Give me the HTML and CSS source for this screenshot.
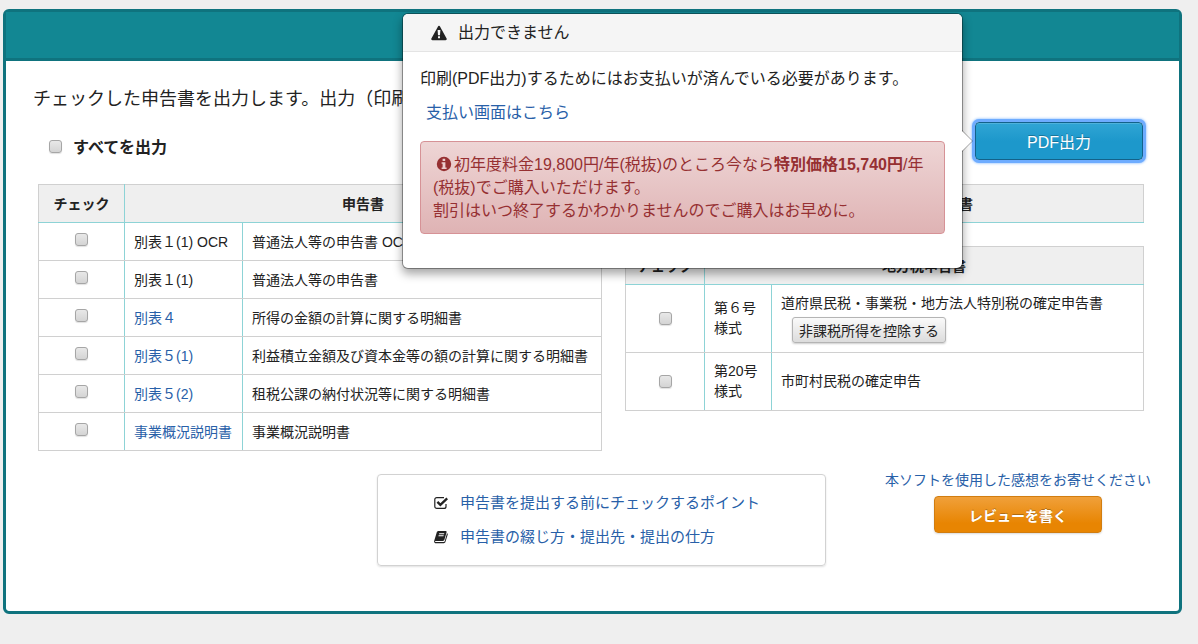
FILE: index.html
```html
<!DOCTYPE html>
<html lang="ja">
<head>
<meta charset="utf-8">
<title>申告書の出力</title>
<link rel="stylesheet" href="styles.css">
</head>
<body>
<main class="panel">
  <header class="panel-head"></header>
  <section class="panel-body">
    <p class="lead">チェックした申告書を出力します。出力（印刷）します。</p>
    <div class="toolbar">
      <label class="check-all"><input type="checkbox" class="check">すべてを出力</label>
      <div class="output">
        <button type="button" class="btn btn-primary">PDF出力</button>
        <div class="popover" role="dialog" aria-labelledby="pop-title">
          <h3 class="popover-title" id="pop-title">
            <svg class="icon-warn" viewBox="0 0 16 16" aria-hidden="true"><path fill="currentColor" fill-rule="evenodd" d="M8 .8c.5 0 .8.3 1 .6l6.6 12c.5.9-.1 1.8-1 1.8H1.400c-.9 0-1.500-.9-1-1.800l6.600-12c.2-.3.500-.6 1-.6zM6.600 5l.4 5.200h2L9.400 5zM7 11.300v2h2v-2z"/></svg>
            出力できません
          </h3>
          <div class="popover-body">
            <p class="popover-text">印刷(PDF出力)するためにはお支払いが済んでいる必要があります。</p>
            <p class="popover-link"><a href="#payment">支払い画面はこちら</a></p>
            <p class="alert"><svg class="icon-info" viewBox="0 0 16 16" aria-hidden="true"><path fill="currentColor" fill-rule="evenodd" d="M8 .8a7.200 7.200 0 1 1 0 14.400A7.200 7.200 0 0 1 8 .8zM6.600 2.800v2.200h2.600V2.800zM5.600 6.200v1.600h1v3.600h-1V13h5v-1.600h-1.200V6.200z"/></svg>初年度料金19,800円/年(税抜)のところ今なら<strong>特別価格15,740円</strong>/年(税抜)でご購入いただけます。<br>割引はいつ終了するかわかりませんのでご購入はお早めに。</p>
          </div>
        </div>
      </div>
    </div>
    <div class="tables">
      <table class="forms forms-main">
        <colgroup><col class="col-check"><col class="col-name"><col></colgroup>
        <thead><tr><th>チェック</th><th colspan="2">申告書</th></tr></thead>
        <tbody>
          <tr><td class="mark"><input type="checkbox" class="check" aria-label="別表１(1) OCR"></td><td>別表１(1) OCR</td><td>普通法人等の申告書 OCR</td></tr>
          <tr><td class="mark"><input type="checkbox" class="check" aria-label="別表１(1)"></td><td>別表１(1)</td><td>普通法人等の申告書</td></tr>
          <tr><td class="mark"><input type="checkbox" class="check" aria-label="別表４"></td><td><a href="#b4">別表４</a></td><td>所得の金額の計算に関する明細書</td></tr>
          <tr><td class="mark"><input type="checkbox" class="check" aria-label="別表５(1)"></td><td><a href="#b51">別表５(1)</a></td><td>利益積立金額及び資本金等の額の計算に関する明細書</td></tr>
          <tr><td class="mark"><input type="checkbox" class="check" aria-label="別表５(2)"></td><td><a href="#b52">別表５(2)</a></td><td>租税公課の納付状況等に関する明細書</td></tr>
          <tr><td class="mark"><input type="checkbox" class="check" aria-label="事業概況説明書"></td><td><a href="#gaikyo">事業概況説明書</a></td><td>事業概況説明書</td></tr>
        </tbody>
      </table>
      <div class="side">
        <table class="forms forms-side">
          <colgroup><col class="col-check"><col class="col-name"><col></colgroup>
          <thead><tr><th>チェック</th><th colspan="2">消費税等申告書</th></tr></thead>
        </table>
        <table class="forms forms-side">
          <colgroup><col class="col-check"><col class="col-name"><col></colgroup>
          <thead><tr><th>チェック</th><th colspan="2">地方税申告書</th></tr></thead>
          <tbody>
            <tr><td class="mark"><input type="checkbox" class="check" aria-label="第６号様式"></td><td>第６号<br>様式</td><td>道府県民税・事業税・地方法人特別税の確定申告書<button type="button" class="btn-small">非課税所得を控除する</button></td></tr>
            <tr><td class="mark"><input type="checkbox" class="check" aria-label="第20号様式"></td><td>第20号<br>様式</td><td>市町村民税の確定申告</td></tr>
          </tbody>
        </table>
      </div>
    </div>
  </section>
  <footer class="panel-foot">
    <ul class="tips">
      <li>
        <svg class="icon-tip" viewBox="0 0 14 14" aria-hidden="true"><path fill="none" stroke="currentColor" stroke-width="1.200" d="M12 8v2.400a2 2 0 0 1-2 2H2.800a2 2 0 0 1-2-2V3.600a2 2 0 0 1 2-2H10"/><path fill="none" stroke="currentColor" stroke-width="2.400" d="M3.400 5.800l3 3 6.800-6.400"/></svg>
        <a href="#points">申告書を提出する前にチェックするポイント</a>
      </li>
      <li>
        <svg class="icon-tip" viewBox="0 0 14 14" aria-hidden="true"><path fill="currentColor" fill-rule="evenodd" d="M4.600 1h7c.8 0 1.200.6 1 1.300L10.400 9.800c-.2.700-.7 1.100-1.400 1.100H1.600c-.5 0-.7.3-.6.6.1.400.5.500 1 .5h7.800c.5 0 .8-.3.900-.7L13 3.300c.7.300.9.800.700 1.500l-2.300 7.300c-.2.700-.8 1.200-1.600 1.200H2c-1.100 0-1.900-.9-1.900-1.900 0-.4.100-.7.200-1L2.700 2.500C3 1.500 3.700 1 4.600 1zM5.300 3.300L5 4.200h5l.3-.9zM4.700 5.300l-.3.900h5l.3-.9z"/></svg>
        <a href="#binding">申告書の綴じ方・提出先・提出の仕方</a>
      </li>
    </ul>
    <div class="review">
      <a href="#review">本ソフトを使用した感想をお寄せください</a>
      <button type="button" class="btn btn-review">レビューを書く</button>
    </div>
  </footer>
</main>
</body>
</html>
```
FILE: styles.css
```css
* { box-sizing: border-box; }

body {
  margin: 0;
  padding: 9px 16px 30px 3px;
  background: #efefef;
  color: #222;
  font-family: "Liberation Sans", "Noto Sans CJK JP", sans-serif;
  font-size: 14px;
  line-height: 20px;
}

p, h3, ul { margin: 0; padding: 0; }
ul { list-style: none; }
a { color: #2860a8; text-decoration: none; }
button { font-family: inherit; cursor: pointer; }

.panel {
  background: #fff;
  border: 3px solid #0f737e;
  border-radius: 6px;
}
.panel-head {
  height: 49px;
  background: #128793;
  border-bottom: 3px solid #0f737e;
}
.panel-body { padding: 26px 35px 0 27px; }

.lead { font-size: 18px; line-height: 24px; }

.toolbar {
  display: flex;
  justify-content: space-between;
  align-items: flex-end;
  margin: 11px 1px 24px 0;
}
.check-all {
  display: flex;
  align-items: center;
  gap: 11px;
  padding-left: 16px;
  font-size: 16px;
  font-weight: bold;
  line-height: 24px;
}

.check {
  appearance: none;
  width: 13px;
  height: 13px;
  margin: 0;
  border: 1px solid #a6a6a6;
  border-radius: 3px;
  background: linear-gradient(#e8e8e8, #d4d4d4);
  box-shadow: 0 1px 1px rgba(0, 0, 0, .12);
  vertical-align: top;
}
.check-all .check { margin-bottom: 4px; }

.output { position: relative; }
.btn {
  display: block;
  width: 168px;
  border-radius: 4px;
  color: #fff;
  text-align: center;
  text-shadow: 0 -1px 0 rgba(0, 0, 0, .25);
}
.btn-primary {
  height: 38px;
  border: 1px solid #13628a;
  background: linear-gradient(#30a5d5, #1d98cb 50%, #1d98cb);
  font-size: 16px;
  box-shadow: inset 0 1px 0 rgba(255, 255, 255, .15), 0 0 0 3px #6eacff, 0 0 3px 3px #6eacff;
}

.popover {
  position: absolute;
  z-index: 1;
  top: 50%;
  right: calc(100% + 12px);
  width: 561px;
  transform: translateY(-50%);
  border: 1px solid rgba(0, 0, 0, .35);
  border-radius: 6px;
  background: #fff;
  background-clip: padding-box;
  box-shadow: 0 5px 10px rgba(0, 0, 0, .35);
  font-size: 16px;
  line-height: 23px;
}
.popover::before,
.popover::after {
  content: "";
  position: absolute;
  top: 50%;
  left: 100%;
  border: 11px solid transparent;
  border-right: 0;
  border-left-color: rgba(0, 0, 0, .35);
  transform: translateY(-50%);
}
.popover::after {
  border-width: 10px;
  border-right: 0;
  border-left-color: #fff;
}
.popover-title {
  display: flex;
  align-items: center;
  gap: 11px;
  padding: 7px 28px;
  border-bottom: 1px solid #e4e4e4;
  border-radius: 5px 5px 0 0;
  background: #f5f5f5;
  font-size: 16px;
  font-weight: normal;
}
.icon-warn { width: 16px; height: 16px; }
.popover-body { padding: 15px 17px 34px; }
.popover-link { margin: 11px 0 17px; padding-left: 6px; }
.alert {
  padding: 11px 12px;
  border: 1px solid #d69296;
  border-radius: 4px;
  background: linear-gradient(#eed5d5, #dfb3b4);
  color: #963032;
}
.icon-info {
  width: 16px;
  height: 16px;
  margin: 0 2px 0 3px;
  vertical-align: -2px;
}

.tables {
  display: grid;
  grid-template-columns: 564fr 519fr;
  align-items: start;
  gap: 23px;
  padding-left: 5px;
}
.side { display: grid; gap: 23px; }

.forms {
  width: 100%;
  table-layout: fixed;
  border-collapse: collapse;
}
.forms-main .col-check { width: 86px; }
.forms-main .col-name { width: 118px; }
.forms-side .col-check { width: 79px; }
.forms-side .col-name { width: 67px; }
.forms th,
.forms td {
  padding: 9px 9px 8px;
  border: 1px solid #d0d0d0;
  text-align: left;
}
.forms th {
  background: #efefef;
  border-bottom-color: #8dd3d6;
  text-align: center;
}
.forms th:not(:last-child),
.forms td:not(:last-child) { border-right-color: #8dd3d6; }
.forms .mark { text-align: center; }
.forms-main .mark {
  padding-top: 10px;
  padding-bottom: 7px;
  vertical-align: top;
}
.forms-side td { padding-top: 8px; padding-bottom: 9px; }
.forms-side .mark {
  padding-top: 12px;
  padding-bottom: 5px;
  vertical-align: middle;
}

.btn-small {
  display: block;
  height: 26px;
  margin: 4px 0 0 11px;
  padding: 0 6px;
  border: 1px solid #b4b4b4;
  border-radius: 3px;
  background: linear-gradient(#fafafa, #dcdcdc);
  box-shadow: 0 1px 2px rgba(0, 0, 0, .2);
  color: #222;
  font-size: 14px;
}

.panel-foot {
  display: flex;
  justify-content: space-between;
  align-items: flex-start;
  padding: 19px 28px 45px 371px;
}
.tips {
  width: 449px;
  margin-top: 4px;
  padding: 11px 16px 11px 56px;
  border: 1px solid #d2d2d2;
  border-radius: 4px;
  box-shadow: 0 1px 2px rgba(0, 0, 0, .12);
  font-size: 15px;
  line-height: 34px;
}
.tips li {
  display: flex;
  align-items: center;
  gap: 12px;
}
.icon-tip { width: 14px; height: 14px; }
.review {
  display: flex;
  flex-direction: column;
  align-items: center;
  gap: 6px;
}
.btn-review {
  height: 37px;
  border: 1px solid #d17d10;
  background: linear-gradient(#f0a03a, #e88502 75%, #e88502);
  box-shadow: 0 1px 2px rgba(0, 0, 0, .15);
  font-size: 14px;
  font-weight: bold;
}
```
